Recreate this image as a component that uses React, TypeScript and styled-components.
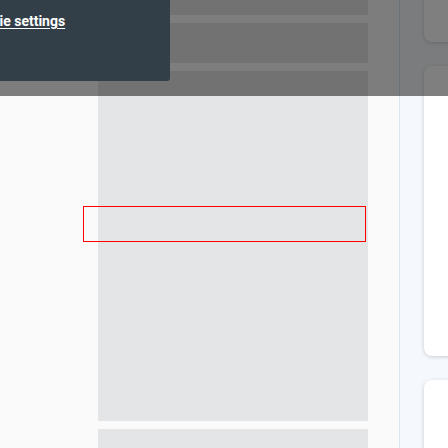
import React from "react";
import styled, { createGlobalStyle } from "styled-components";

const Global = createGlobalStyle`
  html, body {
    margin: 0;
    padding: 0;
    width: 448px;
    height: 448px;
    overflow: hidden;
    background: #fafafa;
    font-family: Roboto, "Liberation Sans", Arial, sans-serif;
  }
  #root { width: 448px; height: 448px; }
`;

const Page = styled.div`
  position: relative;
  width: 448px;
  height: 448px;
  overflow: hidden;
  display: flex;
  flex-direction: row;
  background: #fafafa;
`;

const Gutter = styled.div`
  width: 98px;
  flex: none;
`;

const Column = styled.div`
  width: 270px;
  flex: none;
  display: flex;
  flex-direction: column;
  gap: 8px;
`;

const Block = styled.div<{ $h: number; $first?: boolean }>`
  height: ${(p) => p.$h}px;
  flex: none;
  background: #e4e5e7;
  margin-top: ${(p) => (p.$first ? "-25px" : "0")};
`;

const Spacer = styled.div`
  width: 31px;
  flex: none;
`;

const SidePanel = styled.div`
  flex: 1;
  min-width: 0;
  border-left: 1px solid #d8e6f1;
  background: #f5f9fd;
  padding-left: 24px;
  display: flex;
  flex-direction: column;
  gap: 24px;
  overflow: visible;
`;

const Card = styled.div<{ $h: number; $first?: boolean }>`
  width: 240px;
  height: ${(p) => p.$h}px;
  flex: none;
  background: #ffffff;
  border-radius: 8px;
  box-shadow: 0 1px 4px rgba(0, 0, 0, 0.18);
  margin-top: ${(p) => (p.$first ? "-58px" : "0")};
`;

const Overlay = styled.div`
  position: absolute;
  left: 0;
  top: 0;
  width: 448px;
  height: 96px;
  background: rgba(0, 0, 0, 0.5);
`;

const Banner = styled.div`
  position: absolute;
  left: 0;
  top: 0;
  width: 170px;
  height: 81px;
  background: #333f48;
  border-bottom-right-radius: 3px;
  overflow: hidden;
  padding-top: 11px;
  box-sizing: border-box;
`;

const SettingsLink = styled.a`
  display: block;
  margin-left: -33px;
  white-space: nowrap;
  color: #ffffff;
  font-weight: 700;
  font-size: 14px;
  line-height: 20px;
  text-decoration: underline;
  text-underline-offset: 2px;
`;

const Highlight = styled.div`
  position: absolute;
  left: 83px;
  top: 206px;
  width: 283px;
  height: 36px;
  box-sizing: border-box;
  border: 1px solid #ff0000;
  pointer-events: none;
`;

export default function App() {
  return (
    <>
      <Global />
      <Page>
        <Gutter />
        <Column>
          <Block $h={40} $first />
          <Block $h={40} />
          <Block $h={350} />
          <Block $h={120} />
        </Column>
        <Spacer />
        <SidePanel>
          <Card $h={100} $first />
          <Card $h={290} />
          <Card $h={200} />
        </SidePanel>
        <Overlay />
        <Banner>
          <SettingsLink href="#">Cookie settings</SettingsLink>
        </Banner>
        <Highlight />
      </Page>
    </>
  );
}
